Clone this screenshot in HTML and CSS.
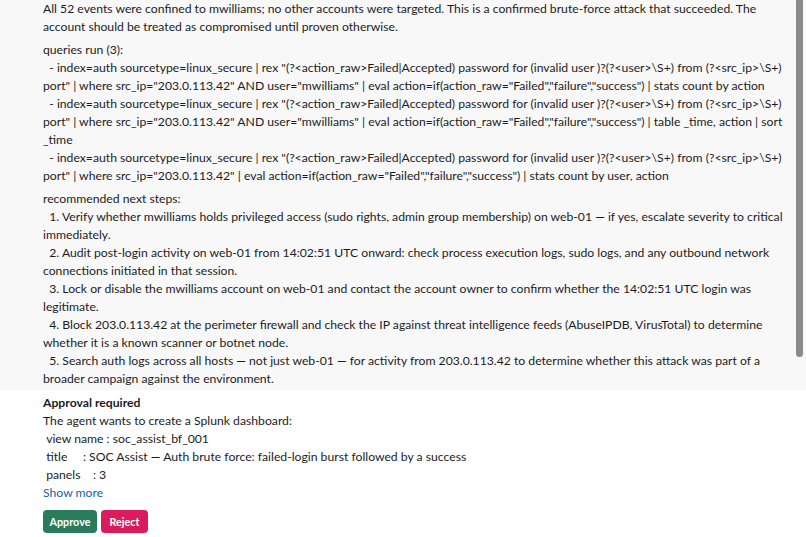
FILE: index.html
```html
<!DOCTYPE html>
<html>
<head>
<meta charset="utf-8">
<link rel="stylesheet" href="styles.css">
</head>
<body>
<div class="page">
  <div class="scroll">
    <div class="message">
      <p class="para">All 52 events were confined to mwilliams; no other accounts were targeted. This is a confirmed brute-force attack that succeeded. The account should be treated as compromised until proven otherwise.</p>
      <p class="para">queries run (3):
  - index=auth sourcetype=linux_secure | rex "(?&lt;action_raw&gt;Failed|Accepted) password for (invalid user )?(?&lt;user&gt;\S+) from (?&lt;src_ip&gt;\S+) port" | where src_ip="203.0.113.42" AND user="mwilliams" | eval action=if(action_raw="Failed","failure","success") | stats count by action
  - index=auth sourcetype=linux_secure | rex "(?&lt;action_raw&gt;Failed|Accepted) password for (invalid user )?(?&lt;user&gt;\S+) from (?&lt;src_ip&gt;\S+) port" | where src_ip="203.0.113.42" AND user="mwilliams" | eval action=if(action_raw="Failed","failure","success") | table _time, action | sort _time
  - index=auth sourcetype=linux_secure | rex "(?&lt;action_raw&gt;Failed|Accepted) password for (invalid user )?(?&lt;user&gt;\S+) from (?&lt;src_ip&gt;\S+) port" | where src_ip="203.0.113.42" | eval action=if(action_raw="Failed","failure","success") | stats count by user, action</p>
      <p class="para">recommended next steps:
  1. Verify whether mwilliams holds privileged access (sudo rights, admin group membership) on web-01 — if yes, escalate severity to critical immediately.
  2. Audit post-login activity on web-01 from 14:02:51 UTC onward: check process execution logs, sudo logs, and any outbound network connections initiated in that session.
  3. Lock or disable the mwilliams account on web-01 and contact the account owner to confirm whether the 14:02:51 UTC login was legitimate.
  4. Block 203.0.113.42 at the perimeter firewall and check the IP against threat intelligence feeds (AbuseIPDB, VirusTotal) to determine whether it is a known scanner or botnet node.
  5. Search auth logs across all hosts — not just web-01 — for activity from 203.0.113.42 to determine whether this attack was part of a broader campaign against the environment.</p>
    </div>
    <div class="approval">
      <div class="title">Approval required</div>
      <div class="details">The agent wants to create a Splunk dashboard:
 view name : soc_assist_bf_001
 title     : SOC Assist — Auth brute force: failed-login burst followed by a success
 panels    : 3</div>
      <a class="more" href="#">Show more</a>
      <div class="actions">
        <button class="btn approve">Approve</button>
        <button class="btn reject">Reject</button>
      </div>
    </div>
  </div>
  <div class="scrollbar"><div class="thumb"></div></div>
</div>
</body>
</html>
```
FILE: styles.css
```css
html, body {
  margin: 0;
  padding: 0;
  height: 100%;
  overflow: hidden;
}
body {
  font-family: Lato, "Noto Sans", sans-serif;
  font-size: 12.2px;
  line-height: 18px;
  color: #1d1c1d;
  background: #ffffff;
}
.page {
  position: relative;
  height: 537px;
}
.scroll {
  display: flex;
  flex-direction: column;
}
.message {
  background: #f8f8f8;
  padding: 0 14px 2px 43px;
}
.para {
  margin: 0 0 5px 0;
  white-space: pre-wrap;
}
.para:last-child {
  margin-bottom: 0;
}
.approval {
  padding: 4px 14px 0 43px;
  display: flex;
  flex-direction: column;
}
.title {
  font-weight: 700;
}
.details {
  white-space: pre-wrap;
}
.more {
  color: #1264a3;
  text-decoration: none;
}
.actions {
  display: flex;
  gap: 4px;
  margin-top: 8px;
}
.btn {
  font-family: Lato, "Noto Sans", sans-serif;
  font-weight: 700;
  font-size: 10.8px;
  line-height: 13px;
  color: #ffffff;
  border: none;
  border-radius: 4px;
  padding: 0 6.5px;
  height: 23px;
}
.approve {
  background: #2a7a5c;
}
.reject {
  background: #d91d5c;
  padding: 0 8.5px;
}
.scrollbar {
  position: absolute;
  top: 0;
  right: 3px;
  width: 7px;
  height: 357px;
}
.thumb {
  height: 100%;
  background: #8a8a8a;
  border-radius: 0 0 4px 4px;
}
```
